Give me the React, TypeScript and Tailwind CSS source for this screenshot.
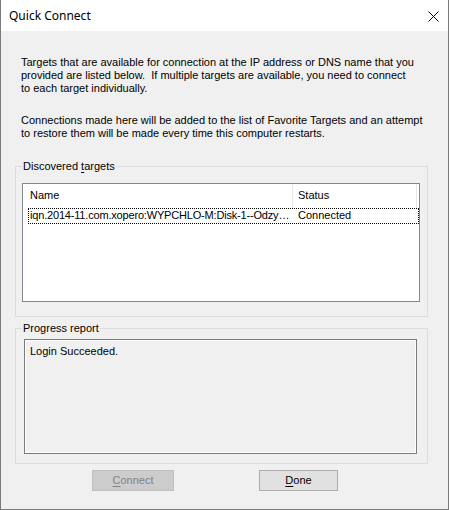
import React from "react";

const body = { fontFamily: '"Liberation Sans", Arial, sans-serif' };

function GroupBox({ label, underline, className, legendClass, children }: { label: string; underline?: number; className?: string; legendClass?: string; children: React.ReactNode }) {
  return (
    <fieldset className={"border border-[#dcdcdc] ml-[14px] mr-[20px] " + (className ?? "")}>
      <legend className={"px-[1px] leading-[13px] text-[#000] " + (legendClass ?? "")}>
        {underline === undefined ? (
          label
        ) : (
          <>
            {label.slice(0, underline)}
            <span className="underline underline-offset-2">{label[underline]}</span>
            {label.slice(underline + 1)}
          </>
        )}
      </legend>
      {children}
    </fieldset>
  );
}

export default function App() {
  return (
    <div className="w-[449px] h-[510px] bg-[#f0f0f0] border-x border-b border-[#7a7a7a] flex flex-col text-[11px] text-black select-none" style={body}>
      {/* title bar */}
      <div className="h-[31px] bg-white flex items-center justify-between pl-[8px] pr-[9px] shrink-0">
        <span className="text-[12px] text-black" style={{ fontFamily: '"Noto Sans", "Open Sans", sans-serif' }}>
          Quick Connect
        </span>
        <svg width="11" height="11" viewBox="0 0 11 11" className="mt-[1px]">
          <path d="M0.5 0.5 L10.5 10.5 M10.5 0.5 L0.5 10.5" stroke="#000" strokeWidth="1" fill="none" />
        </svg>
      </div>

      <div className="ml-[20px] mt-[25px] leading-[13px]">
        <p className="w-[396px]">
          Targets that are available for connection at the IP address or DNS name that you provided are listed below.&nbsp; If multiple targets are available, you need to connect to each target individually.
        </p>
        <p className="mt-[19px] w-[408px]">
          Connections made here will be added to the list of Favorite Targets and an attempt to restore them will be made every time this computer restarts.
        </p>
      </div>

      <GroupBox label="Discovered targets" underline={11} className="mt-[19.5px] h-[157px] pl-[6px] pr-[7px]">
        <div className="mt-[10px] h-[119px] border border-[#828790] bg-white overflow-hidden">
          <div className="h-[24px] flex items-center text-black">
            <div className="w-[270px] shrink-0 h-full pl-[7px] flex items-center border-r border-[#e5e5e5]">Name</div>
            <div className="w-[124px] shrink-0 h-full pl-[5px] flex items-center border-r border-[#e5e5e5]">Status</div>
          </div>
          <div className="h-[16px] ml-[5px] border border-dotted border-black flex items-center">
            <div className="w-[264px] shrink-0 pl-[1px] whitespace-nowrap tracking-[-0.18px]">iqn.2014-11.com.xopero:WYPCHLO-M:Disk-1--Odzy…</div>
            <div className="pl-[5px] whitespace-nowrap">Connected</div>
          </div>
        </div>
      </GroupBox>

      <GroupBox label="Progress report" legendClass="-ml-[2px]" className="mt-[5px] h-[142px] pl-[8px] pr-[10px]">
        <div className="mt-[4px] h-[115px] border border-[#7a7a7a] shadow-[inset_0_0_0_1px_#ffffff] pl-[5px] pt-[3px]">
          Login Succeeded.
        </div>
      </GroupBox>

      <div className="flex mt-[6px]">
        <button disabled className="ml-[91px] w-[82px] h-[21px] bg-[#cccccc] border border-[#bfbfbf] text-[#838383] text-[11px]" style={body}>
          <span className="underline underline-offset-2">C</span>onnect
        </button>
        <button className="ml-[85px] w-[79px] h-[21px] bg-[#e1e1e1] border border-[#adadad] text-black text-[11px]" style={body}>
          <span className="underline underline-offset-2">D</span>one
        </button>
      </div>
    </div>
  );
}
